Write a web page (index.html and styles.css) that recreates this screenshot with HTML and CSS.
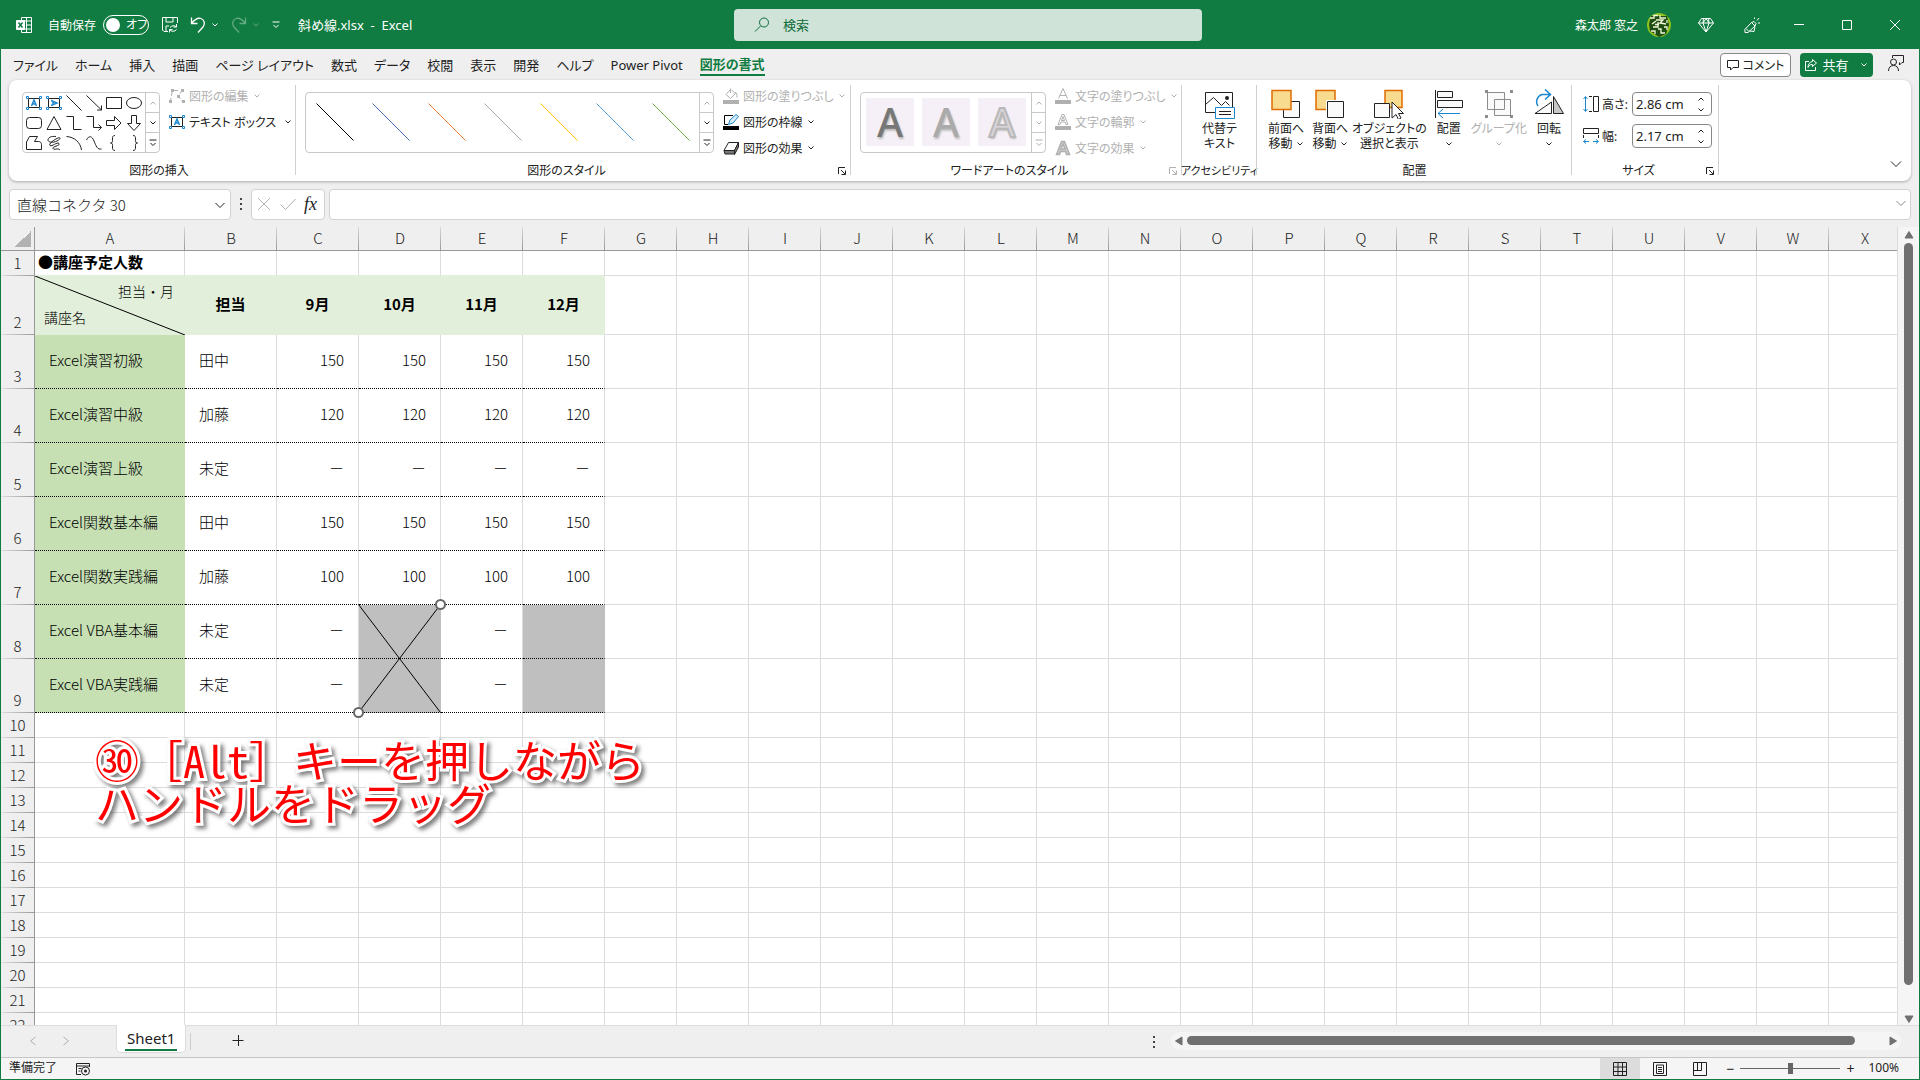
FILE: index.html
```html
<!DOCTYPE html>
<html lang="ja">
<head>
  <meta charset="UTF-8" />
  <meta name="viewport" content="width=device-width, initial-scale=1.0"/>
  <title>斜め線.xlsx - Excel</title>
  <link rel="stylesheet" href="styles.css">
</head>
<body>
  <svg class="sprite" aria-hidden="true">
    <symbol id="chev" viewBox="0 0 8 8"><path d="M1.5 2.5 4 5l2.500-2.500"/></symbol>
    <symbol id="chev-up" viewBox="0 0 8 8"><path d="M1.500 5.500 4 3l2.500 2.500"/></symbol>
    <symbol id="more" viewBox="0 0 8 8"><path d="M.5 1h7M1.500 4 4 6.500 6.500 4"/></symbol>
    <symbol id="launcher" viewBox="0 0 10 10"><path d="M1.500 8V1.500H8M4 4l4 4M8.500 4.500v4h-4"/></symbol>
    <symbol id="abox" viewBox="0 0 16 16">
      <path d="M2.500 3.500h11v9h-11z"/>
      <g class="blue"><path d="M5.500 11 8 5l2.500 6M6.500 9h3" stroke-width="1.500"/><path class="white" d="M.5 1.500h2v2h-2zM13.500 1.500h2v2h-2zM.5 12.500h2v2h-2zM13.500 12.500h2v2h-2z"/></g>
    </symbol>
    <symbol id="abox-v" viewBox="0 0 16 16">
      <path d="M2.500 3.500h11v9h-11z"/>
      <g class="blue"><path d="M5 5.500 11 8l-6 2.500M7 6.500v3" stroke-width="1.500"/><path class="white" d="M.5 1.500h2v2h-2zM13.500 1.500h2v2h-2zM.5 12.500h2v2h-2zM13.500 12.500h2v2h-2z"/></g>
    </symbol>
  </svg>

  <header class="titlebar">
    <div class="title-left">
      <svg class="i16 light" viewBox="0 0 16 16"><path d="M5.500 3V.5h10v15h-10V13M10.500.5v15M5.500 4h10M10.500 8h5M5.500 12h10"/><path fill="#fff" d="M.5 3.500h8v9h-8z"/><path class="mark" d="m2.500 5.500 4 5M6.500 5.500l-4 5"/></svg>
      <label class="autosave">自動保存 <span class="switch"><input type="checkbox"><i></i><b>オフ</b></span></label>
      <button class="tbtn save" aria-label="上書き保存"><svg class="i16 light" viewBox="0 0 16 16"><path d="M6 14.500H2L.5 13V.5h15V6M4 .5v4.500h7V.5M4 14.500V9h3M14.500 7v3h-3M7.500 15.500v-3h3M8 10.500a4 3.500 0 0 1 6.500-.5M14.500 12.500a4 3.500 0 0 1-7 0"/></svg></button>
      <button class="tbtn" aria-label="元に戻す"><svg class="i16 light" viewBox="0 0 16 16"><path stroke-width="1.300" d="M1.500.5v6h6M1.500 6.500C5 2 8 .5 11 1.500c4 1.500 4 6 2 8.500l-5 5.500"/></svg><svg class="i8 light"><use href="#chev"/></svg></button>
      <button class="tbtn dim" aria-label="やり直し"><svg class="i16 light" viewBox="0 0 16 16"><path stroke-width="1.300" d="M14.500.5v6h-6M14.500 6.500C11 2 8 .5 5 1.500c-4 1.500-4 6-2 8.500l5 5.500"/></svg><svg class="i8 light"><use href="#chev"/></svg></button>
      <button class="tbtn" aria-label="カスタマイズ"><svg class="i8 light"><use href="#more"/></svg></button>
      <span class="doc-name">斜め線.xlsx&nbsp; -&nbsp; Excel</span>
    </div>
    <label class="search">
      <svg class="i16" viewBox="0 0 16 16"><circle cx="10" cy="5.500" r="4.500"/><path d="M6.500 9 1 14.500"/></svg>
      <input type="text" placeholder="検索" aria-label="検索">
    </label>
    <div class="title-right">
      <span class="user">森太郎 窓之</span>
      <svg class="avatar" viewBox="0 0 24 24"><circle cx="12" cy="12" r="12" fill="#8dc21f"/><path fill="#1e4d14" d="M4 3h16l2 9-3 9-7 3-9-6-1-7z"/><path d="M3 5h4V2.500h4M13 2v3h6M9 7h7l-3 3 6 1M5 11l4-3M6 14h5V9M8 11.500h4M4 18h4v3M11 16h3v4h4M17 14h3v3M20 7v3" stroke="#f4f8dc" stroke-width="1.300" fill="none"/></svg>
      <button class="wbtn narrow" aria-label="Premium"><svg class="i16 light" viewBox="0 0 16 16"><path d="M3.500 1.500h9l3 4.500L8 15 .5 6zM.5 6h15M5.500 1.500 5 6l3 9 3-9-.5-4.500M5 6l3-4.500L11 6"/></svg></button>
      <button class="wbtn narrow" aria-label="新機能"><svg class="i16 light" viewBox="0 0 16 16"><path d="M1 15.500.8 12.500 7.500 5.500l3.500 3.500-7 6.500zM2 11.500l3 3M5.500 14l4.500.5 1-5M7.500 5.500 10 4.500l2 2-1 2.500M10.500 2V.5M13 3.500l2-2.500M14 6h2"/></svg></button>
      <button class="wbtn" aria-label="最小化"><svg class="i10 light" viewBox="0 0 10 10"><path d="M0 4.500h10"/></svg></button>
      <button class="wbtn" aria-label="最大化"><svg class="i10 light" viewBox="0 0 10 10"><path d="M.5.5h9v9h-9z"/></svg></button>
      <button class="wbtn" aria-label="閉じる"><svg class="i10 light" viewBox="0 0 10 10"><path d="m0 0 10 10M10 0 0 10"/></svg></button>
    </div>
  </header>

  <div class="window">
    <nav class="tabs">
      <button class="tab">ファイル</button>
      <button class="tab">ホーム</button>
      <button class="tab">挿入</button>
      <button class="tab">描画</button>
      <button class="tab">ページ レイアウト</button>
      <button class="tab">数式</button>
      <button class="tab">データ</button>
      <button class="tab">校閲</button>
      <button class="tab">表示</button>
      <button class="tab">開発</button>
      <button class="tab">ヘルプ</button>
      <button class="tab">Power Pivot</button>
      <button class="tab active">図形の書式</button>
      <div class="tab-actions">
        <button class="comment"><svg class="i12" viewBox="0 0 12 12"><path d="M.5 1.500h11v7H6L3.500 11V8.500h-3z"/></svg>コメント</button>
        <button class="share"><svg class="i12 light" viewBox="0 0 12 12"><path d="M4 2.500H.5v9h10V8M7.500.5 11.500 4 7.500 7.500V5.500C5 5.500 4 6.500 3 8.500c0-3 1.500-5.500 4.500-6z"/></svg>共有<svg class="i8 light"><use href="#chev"/></svg></button>
        <button class="presence" aria-label="共同作業"><svg class="i16" viewBox="0 0 16 16"><path d="M4.500.5h11v7H14L11.500 10V7.500M4.500.5V3"/><circle cx="5.500" cy="7" r="3"/><path d="M.5 16c0-3.500 2-5.500 5-5.500s5 2 5 5.500"/></svg></button>
      </div>
    </nav>

    <section class="ribbon">
      <div class="group g-insert">
        <div class="group-body">
          <div class="gallery">
            <div class="shapes">
              <svg class="i16"><use href="#abox"/></svg>
              <svg class="i16"><use href="#abox-v"/></svg>
              <svg class="i16" viewBox="0 0 16 16"><path d="m.5.5 15 15"/></svg>
              <svg class="i16" viewBox="0 0 16 16"><path d="m.5.500 15 14.500M15.500 10.500V15H11"/></svg>
              <svg class="i16" viewBox="0 0 16 16"><path d="M.5 2.500h15v11H.5z"/></svg>
              <svg class="i16" viewBox="0 0 16 16"><ellipse cx="8" cy="8" rx="7.500" ry="5.500"/></svg>
              <svg class="i16" viewBox="0 0 16 16"><rect x=".5" y="2.500" width="15" height="11" rx="3"/></svg>
              <svg class="i16" viewBox="0 0 16 16"><path d="m8 1.500 7 13H1z"/></svg>
              <svg class="i16" viewBox="0 0 16 16"><path d="M.5 1.500h7v13h8"/></svg>
              <svg class="i16" viewBox="0 0 16 16"><path d="M.5 1.500h7v11h8M12.500 9.500l3 3-3 3"/></svg>
              <svg class="i16" viewBox="0 0 16 16"><path d="M.5 5.500h8v-4L15 8l-6.500 6.500v-4h-8z"/></svg>
              <svg class="i16" viewBox="0 0 16 16"><path d="M5.500.5h5v8h4L8 15.500 1.500 8.500h4z"/></svg>
              <svg class="i16" viewBox="0 0 16 16"><path d="M3.500 1.500h8L8.500 6.500h4c2 0 3 1.500 3 3v5H.5V7z"/></svg>
              <svg class="i16" viewBox="0 0 16 16"><path d="M10 1.500C5 1 2 2.500 2 5s5 3 9 1 4-4 1-3S2 9 4 10.500s7-4 9-2-7 3-6 5 5-1 7 1.500"/></svg>
              <svg class="i16" viewBox="0 0 16 16"><path d="M.5 1.500c8 .5 14 6 15 13.500"/></svg>
              <svg class="i16" viewBox="0 0 16 16"><path d="M.5 5C3 0 6 1 8 6s3.500 9 7.500 8"/></svg>
              <svg class="i16" viewBox="0 0 16 16"><path d="M9 .5C6.500.5 6.500 2 6.500 4S7 8 4.500 8C7 8 6.500 10 6.500 12s0 3.500 2.500 3.500"/></svg>
              <svg class="i16" viewBox="0 0 16 16"><path d="M7 .5C9.500.5 9.500 2 9.500 4S9 8 11.500 8C9 8 9.500 10 9.500 12s0 3.500-2.500 3.500"/></svg>
            </div>
            <div class="scroller"><button class="off" aria-label="上へ"><svg class="i8"><use href="#chev-up"/></svg></button><button aria-label="下へ"><svg class="i8"><use href="#chev"/></svg></button><button aria-label="その他"><svg class="i8"><use href="#more"/></svg></button></div>
          </div>
          <div class="stack">
            <button class="cmd" disabled><svg class="i16" viewBox="0 0 16 16"><path d="M3 4 1.500 13.500M13 2.500 9.500 8l3.500 5.500M5 2.500h6" stroke-dasharray="4 2"/><path class="solid" d="M2 1h3v3H2zM12 1h3v3h-3zM0 12h3v3H0zM13 12h3v3h-3zM8 7h3v3H8z"/></svg>図形の編集<svg class="i8"><use href="#chev"/></svg></button>
            <button class="cmd wide-gap"><svg class="i16"><use href="#abox"/></svg>テキスト ボックス<svg class="i8"><use href="#chev"/></svg></button>
          </div>
        </div>
        <div class="group-foot"><span>図形の挿入</span></div>
      </div>

      <div class="group g-styles">
        <div class="group-body">
          <div class="gallery">
            <div class="lines">
              <svg viewBox="0 0 38 38"><path stroke="#000" d="m.5.5 37 37"/></svg>
              <svg viewBox="0 0 38 38"><path stroke="#4472c4" d="m.5.5 37 37"/></svg>
              <svg viewBox="0 0 38 38"><path stroke="#ed7d31" d="m.5.5 37 37"/></svg>
              <svg viewBox="0 0 38 38"><path stroke="#a5a5a5" d="m.5.5 37 37"/></svg>
              <svg viewBox="0 0 38 38"><path stroke="#ffc000" d="m.5.5 37 37"/></svg>
              <svg viewBox="0 0 38 38"><path stroke="#5b9bd5" d="m.5.5 37 37"/></svg>
              <svg viewBox="0 0 38 38"><path stroke="#70ad47" d="m.5.5 37 37"/></svg>
            </div>
            <div class="scroller"><button class="off" aria-label="上へ"><svg class="i8"><use href="#chev-up"/></svg></button><button aria-label="下へ"><svg class="i8"><use href="#chev"/></svg></button><button aria-label="その他"><svg class="i8"><use href="#more"/></svg></button></div>
          </div>
          <div class="stack">
            <button class="cmd" disabled><svg class="i16" viewBox="0 0 16 16"><path d="M7.500 1.500 3 6.500l4.500 4 5-5-4-3.500M7.500 5V.5M12 4.500c2 0 2 2 2 5"/><path class="solid" d="M0 12h16v4H0z"/></svg>図形の塗りつぶし<svg class="i8"><use href="#chev"/></svg></button>
            <button class="cmd"><svg class="i16 black" viewBox="0 0 16 16"><path d="M10 1.500H1.500v9H5"/><path class="blue" fill="#d9ecf9" d="M5.500 10.500 7 6l6-5.500 2.500 2L10 9z"/><path class="solid" d="M0 12h16v4H0z"/></svg>図形の枠線<svg class="i8"><use href="#chev"/></svg></button>
            <button class="cmd"><svg class="i16" viewBox="0 0 16 16"><path d="M5.500 2.500h10l-4 8H1z"/><path fill="#777" d="M11.500 10.500v4L15.500 7V2.500zM1 10.500h10.500v3.500H2z"/></svg>図形の効果<svg class="i8"><use href="#chev"/></svg></button>
          </div>
        </div>
        <div class="group-foot"><span>図形のスタイル</span><button class="launch" aria-label="図形の書式設定"><svg class="i10"><use href="#launcher"/></svg></button></div>
      </div>

      <div class="group g-wordart">
        <div class="group-body">
          <div class="gallery off">
            <div class="arts">
              <button class="art art-dark">A</button>
              <button class="art art-mid">A</button>
              <button class="art art-line">A</button>
            </div>
            <div class="scroller off"><button class="off" aria-label="上へ"><svg class="i8"><use href="#chev-up"/></svg></button><button class="off" aria-label="下へ"><svg class="i8"><use href="#chev"/></svg></button><button class="off" aria-label="その他"><svg class="i8"><use href="#more"/></svg></button></div>
          </div>
          <div class="stack">
            <button class="cmd" disabled><svg class="i16" viewBox="0 0 16 16"><path d="M3.500 10.500 8 .5l4.500 10M5 7.500h6"/><path class="solid" d="M0 12h16v4H0z"/></svg>文字の塗りつぶし<svg class="i8"><use href="#chev"/></svg></button>
            <button class="cmd" disabled><svg class="i16" viewBox="0 0 16 16"><path d="M3 10.500 7 .5h2l4 10h-2L10 8H6l-1 2.500zM6.500 6.500h3L8 2.500z"/><path class="solid" d="M0 12h16v4H0z"/></svg>文字の輪郭<svg class="i8"><use href="#chev"/></svg></button>
            <button class="cmd" disabled><svg class="i16" viewBox="0 0 16 16"><path fill="#ccc" stroke-width="1.500" d="M1.500 14.500 6.500 1.500h3l5 13h-3l-1-3h-5l-1 3zM6 9h4L8 4z"/></svg>文字の効果<svg class="i8"><use href="#chev"/></svg></button>
          </div>
        </div>
        <div class="group-foot"><span>ワードアートのスタイル</span><button class="launch off" aria-label="文字の効果の設定"><svg class="i10"><use href="#launcher"/></svg></button></div>
      </div>

      <div class="group g-access">
        <div class="group-body">
          <button class="big"><svg class="i30" viewBox="0 0 30 30"><path d="M10 23.500H.5v-20h27V18M.5 15.500l8-7 8 8 4-4 4 4"/><circle class="solid" cx="22" cy="9" r="2"/><path class="blue white" d="M10.500 18.500h19v11h-19z"/><path d="M14 22.500h12M14 25.500h12"/></svg>代替テ<br>キスト</button>
        </div>
        <div class="group-foot"><span>アクセシビリティ</span></div>
      </div>

      <div class="group g-arrange">
        <div class="group-body">
          <button class="big"><svg class="i30" viewBox="0 0 30 30"><path class="paper" d="M12.500 12.500h16v16h-16z"/><path class="gold" d="M1 1.500h19v19H1z"/></svg>前面へ<br>移動 <svg class="i8"><use href="#chev"/></svg></button>
          <button class="big"><svg class="i30" viewBox="0 0 30 30"><path class="gold" d="M1 1.500h19v19H1z"/><path d="M11 11h19v19H11z" fill="#fff" stroke="none"/><path class="paper" d="M12.500 12.500h16v16h-16z"/></svg>背面へ<br>移動 <svg class="i8"><use href="#chev"/></svg></button>
          <button class="big wide"><svg class="i30" viewBox="0 0 30 30"><path class="gold" d="M11 1.500h17v17H11z"/><path class="paper" d="M.5 14.500h15v14H.5z"/><path fill="#fff" d="M18 13v16l4-3.500 2.500 5 2.500-1.500-2.500-4.500h5z"/></svg>オブジェクトの<br>選択と表示</button>
          <button class="big"><svg class="i30" viewBox="0 0 30 30"><path d="M1.500 1v28"/><path class="paper" d="M3.500 2.500h15v6h-15zM3.500 11.500h25v7h-25z"/><path class="blue" d="M4 24.500h22M9 20l-5 4.500L9 29"/></svg>配置<br><svg class="i8"><use href="#chev"/></svg></button>
          <button class="big" disabled><svg class="i30" viewBox="0 0 30 30"><path class="paper dark" d="M3.500 3.500h17v17h-17zM10.500 10.500h16v16h-16z"/><path class="solid dark" d="M1 1h3v3H1zM26 1h3v3h-3zM1 26h3v3H1zM26 26h3v3h-3z"/></svg>グループ化<br><svg class="i8"><use href="#chev"/></svg></button>
          <button class="big"><svg class="i30" viewBox="0 0 30 30"><path class="paper" d="M1 24.500 17.500 13v11.500z"/><path fill="#c8c8c8" d="M19.500 7.500 29.500 24.500h-10z"/><path class="blue" d="M4 17A7.500 7.500 0 0 1 8 5.500h8M11 .5l5.500 5-5.500 5" stroke-width="1.500"/></svg>回転<br><svg class="i8"><use href="#chev"/></svg></button>
        </div>
        <div class="group-foot"><span>配置</span></div>
      </div>

      <div class="group g-size">
        <div class="sizes">
          <div class="size-row">
            <svg class="i16" viewBox="0 0 16 16"><path class="blue" d="M2.500 1v14M.5 3l2-2.500 2 2.500M.5 13l2 2.500 2-2.500"/><path d="M10.500.5h5v15h-5zM6 .5h3M6 15.500h3"/></svg>
            <label for="shapeHeight">高さ:</label>
            <div class="spin"><input id="shapeHeight" type="text" value="2.86 cm"><span><button aria-label="増やす"><svg class="i8"><use href="#chev-up"/></svg></button><button aria-label="減らす"><svg class="i8"><use href="#chev"/></svg></button></span></div>
          </div>
          <div class="size-row">
            <svg class="i16" viewBox="0 0 16 16"><path d="M.5.5h15v5H.5zM.5 7v3M15.500 7v3"/><path class="blue" d="M1 13.500h5M10 13.500h5M3 11.500.5 13.500l2.500 2M13 11.500l2.500 2-2.500 2"/></svg>
            <label for="shapeWidth">幅:</label>
            <div class="spin"><input id="shapeWidth" type="text" value="2.17 cm"><span><button aria-label="増やす"><svg class="i8"><use href="#chev-up"/></svg></button><button aria-label="減らす"><svg class="i8"><use href="#chev"/></svg></button></span></div>
          </div>
        </div>
        <div class="group-foot"><span>サイズ</span><button class="launch" aria-label="サイズの設定"><svg class="i10"><use href="#launcher"/></svg></button></div>
      </div>
      <button class="collapse" aria-label="リボンを折りたたむ"><svg class="i12" viewBox="0 0 12 12"><path d="m1 3.500 5 5 5-5"/></svg></button>
    </section>

    <div class="formula-bar">
      <div class="namebox"><input type="text" value="直線コネクタ 30" aria-label="名前ボックス"><button aria-label="名前の一覧"><svg class="i12" viewBox="0 0 12 12"><path d="m1.500 4 4.500 4.500L10.500 4"/></svg></button></div>
      <span class="dots"></span>
      <div class="fx">
        <button disabled aria-label="キャンセル"><svg class="i16" viewBox="0 0 16 16"><path d="m2 2 12 12M14 2 2 14"/></svg></button>
        <button disabled aria-label="入力"><svg class="i16" viewBox="0 0 16 16"><path d="m.5 8.500 5 5L15.500 3"/></svg></button>
        <button class="fn" aria-label="関数の挿入">fx</button>
      </div>
      <div class="formula"><input type="text" aria-label="数式バー"><button aria-label="展開"><svg class="i12" viewBox="0 0 12 12"><path d="m1.500 4 4.500 4.500L10.500 4"/></svg></button></div>
    </div>

    <main class="sheet">
      <div class="grid-view">
        <table class="grid" id="grid">
          <colgroup><col class="c-head"><col class="c-a"><col class="c-b"><col class="c-num"><col class="c-num"><col class="c-num"><col class="c-num"></colgroup>
          <thead><tr><th class="corner"></th></tr></thead>
          <tbody>
            <tr class="r1"><td class="title">●講座予定人数</td><td></td><td></td><td></td><td></td><td></td></tr>
            <tr class="r2">
              <td class="split"><svg class="slash" viewBox="0 0 150 59" preserveAspectRatio="none"><path d="M0 0l150 59"/></svg><div class="upper">担当・月</div><div class="lower">講座名</div></td>
              <td>担当</td><td>9月</td><td>10月</td><td>11月</td><td>12月</td>
            </tr>
            <tr class="data"><td>Excel演習初級</td><td>田中</td><td>150</td><td>150</td><td>150</td><td>150</td></tr>
            <tr class="data"><td>Excel演習中級</td><td>加藤</td><td>120</td><td>120</td><td>120</td><td>120</td></tr>
            <tr class="data"><td>Excel演習上級</td><td>未定</td><td>－</td><td>－</td><td>－</td><td>－</td></tr>
            <tr class="data"><td>Excel関数基本編</td><td>田中</td><td>150</td><td>150</td><td>150</td><td>150</td></tr>
            <tr class="data"><td>Excel関数実践編</td><td>加藤</td><td>100</td><td>100</td><td>100</td><td>100</td></tr>
            <tr class="data"><td>Excel VBA基本編</td><td>未定</td><td>－</td>
              <td class="gray"><svg class="cross" viewBox="0 0 96 122"><path d="m6.500 6.500 82 108M88.500 6.500l-82 108"/><circle cx="88.500" cy="6.500" r="4.500"/><circle cx="6.500" cy="114.500" r="4.500"/></svg></td>
              <td>－</td><td class="gray"></td></tr>
            <tr class="data"><td>Excel VBA実践編</td><td>未定</td><td>－</td><td class="gray"></td><td>－</td><td class="gray"></td></tr>
          </tbody>
        </table>
        <p class="caption">㉚［<span>Alt</span>］キーを押しながら<br>ハンドルをドラッグ</p>
      </div>
      <div class="vscroll"><svg class="i10" viewBox="0 0 10 10"><path d="M5 1.500 9 8H1z"/></svg><div class="thumb"></div><svg class="i10" viewBox="0 0 10 10"><path d="M5 8.500 1 2h8z"/></svg></div>
    </main>

    <div class="sheet-tabs">
      <button class="nav" disabled aria-label="前のシート"><svg class="i10" viewBox="0 0 10 10"><path d="M7.500 1 2.500 5l5 4"/></svg></button>
      <button class="nav" disabled aria-label="次のシート"><svg class="i10" viewBox="0 0 10 10"><path d="m2.500 1 5 4-5 4"/></svg></button>
      <button class="sheet-tab"><span>Sheet1</span></button>
      <button class="add" aria-label="新しいシート"><svg class="i12" viewBox="0 0 12 12"><path d="M.5 6.500h11M6.500 1v11"/></svg></button>
      <span class="dots"></span>
      <div class="hscroll"><svg class="i10" viewBox="0 0 10 10"><path d="M1.500 5 8 1v8z"/></svg><div class="thumb"></div><svg class="i10" viewBox="0 0 10 10"><path d="M8.500 5 2 1v8z"/></svg></div>
    </div>

    <footer class="status">
      <span>準備完了</span>
      <button class="macro" aria-label="マクロの記録"><svg class="i14" viewBox="0 0 14 14"><path d="M5 12.500H.5V1.500h13V5M.5 4h13M2.500 6.500h3M2.500 9h2"/><circle cx="9.500" cy="9" r="4"/><circle class="solid" cx="9.500" cy="9" r="1.500"/></svg></button>
      <div class="views">
        <button class="view on" aria-label="標準"><svg class="i14" viewBox="0 0 14 14"><path d="M.5.5h13v13H.5zM5 .5v13M9.500.5v13M.5 5h13M.5 9.500h13"/></svg></button>
        <button class="view" aria-label="ページ レイアウト"><svg class="i14" viewBox="0 0 14 14"><path d="M.5.500h13v13H.5zM3.500 3h7v8.500h-7zM5 5.500h4M5 7.500h4M5 9.500h4"/></svg></button>
        <button class="view" aria-label="改ページ プレビュー"><svg class="i14" viewBox="0 0 14 14"><path d="M.5.500h13v13H.5zM.5 8.500h8v-8M4.500.5v8"/></svg></button>
      </div>
      <button class="zoom-btn" aria-label="縮小">−</button>
      <input class="zoom" type="range" min="0" max="100" value="50" aria-label="ズーム">
      <button class="zoom-btn" aria-label="拡大">+</button>
      <span class="percent">100%</span>
    </footer>
  </div>
  <script src="script.js"></script>
</body>
</html>
```

FILE: styles.css
```css
* {
  box-sizing: border-box;
}
body {
  margin: 0;
  height: 100vh;
  display: flex;
  flex-direction: column;
  overflow: hidden;
  background: #efefef;
  color: #222;
  font-family: "Noto Sans", "Noto Sans CJK JP", sans-serif;
  font-size: 12px;
  font-feature-settings: "palt";
}
button, input {
  font: inherit;
  font-feature-settings: inherit;
  color: inherit;
  border: 0;
  padding: 0;
  margin: 0;
  background: none;
}
input {
  min-width: 0;
  outline: 0;
}
button {
  white-space: nowrap;
}

/* icons */
.sprite {
  position: absolute;
  width: 0;
  height: 0;
}
svg {
  flex: none;
  fill: none;
  stroke: currentColor;
}
.i8 { width: 8px; height: 8px; }
.i10 { width: 10px; height: 10px; }
.i12 { width: 12px; height: 12px; }
.i14 { width: 14px; height: 14px; }
.i16 { width: 16px; height: 16px; }
.i30 { width: 30px; height: 30px; }
.light { color: #fff; }
.black { color: #000; }
.dark { color: #8c8c8c; stroke: #8c8c8c; }
.blue { stroke: #1b87cf; }
.white { fill: #fff; }
.solid { fill: currentColor; stroke: none; }
.paper { fill: #fafafa; }
.gold { fill: #f8db8f; stroke: #e06c00; stroke-width: 1.5; }
.mark { stroke: #107c41; stroke-width: 1.5; }
button:disabled,
.off {
  color: #b0b0b0;
}

/* title bar */
.titlebar {
  flex: none;
  height: 49px;
  display: grid;
  grid-template-columns: 1fr 468px 1fr;
  align-items: center;
  padding-left: 16px;
  background: #107c41;
  color: #fff;
}
.title-left,
.title-right {
  display: flex;
  align-items: center;
}
.autosave {
  display: flex;
  align-items: center;
  gap: 7px;
  margin: 0 13px 0 16px;
}
.switch {
  position: relative;
  width: 46px;
  height: 20px;
  border: 1px solid #fff;
  border-radius: 10px;
}
.switch input {
  position: absolute;
  inset: 0;
  opacity: 0;
}
.switch i {
  position: absolute;
  left: 2px;
  top: 2px;
  width: 14px;
  height: 14px;
  border-radius: 50%;
  background: #fff;
}
.switch b {
  display: block;
  padding-left: 22px;
  line-height: 18px;
  font-weight: 400;
}
.tbtn {
  display: flex;
  align-items: center;
  gap: 5px;
  margin-right: 12px;
}
.dim {
  opacity: .35;
}
.doc-name {
  margin-left: 6px;
  font-size: 13px;
}
.search {
  display: flex;
  align-items: center;
  gap: 13px;
  height: 32px;
  padding-left: 20px;
  border-radius: 4px;
  background: #cfe3d8;
  color: #0e6b38;
  font-size: 13px;
}
.search input {
  flex: 1;
}
.search input::placeholder {
  color: #0e6b38;
}
.title-right {
  justify-content: flex-end;
  padding-right: 1px;
}
.avatar {
  width: 24px;
  height: 24px;
  margin: 0 12px 0 9px;
  stroke: none;
}
.wbtn {
  display: flex;
  justify-content: center;
  width: 48px;
}
.narrow {
  width: 46px;
}

/* window below the title bar */
.window {
  flex: 1;
  min-height: 0;
  display: flex;
  flex-direction: column;
  border: 1px solid #107c41;
  border-top: 0;
}
.tabs {
  flex: none;
  display: flex;
  align-items: center;
  gap: 17px;
  height: 31px;
  padding: 0 15px 0 12px;
  font-size: 13px;
}
.tab {
  height: 23px;
  line-height: 22px;
}
.active {
  border-bottom: 2px solid #107c41;
  color: #107c41;
  font-weight: 700;
}
.tab-actions {
  display: flex;
  align-items: center;
  margin-left: auto;
}
.comment,
.share {
  display: flex;
  align-items: center;
  justify-content: center;
  height: 24px;
  border-radius: 4px;
}
.comment {
  gap: 4px;
  width: 71px;
  border: 1px solid #888;
  background: #fff;
  font-size: 12px;
}
.share {
  gap: 5px;
  width: 73px;
  margin: 0 15px 0 9px;
  background: #107c41;
  color: #fff;
}
.share .i8 {
  margin-left: 6px;
}

/* ribbon */
.ribbon {
  flex: none;
  display: flex;
  margin: 0 8px;
  padding: 3px 0;
  border-radius: 8px;
  background: #fff;
  box-shadow: 0 1px 3px #aaa;
}
.group {
  position: relative;
  flex: none;
  height: 95px;
  display: flex;
  flex-direction: column;
  justify-content: space-between;
}
.group::after {
  content: "";
  position: absolute;
  top: 2px;
  right: 0;
  bottom: 3px;
  width: 1px;
  background: #d0d0d0;
}
.group-body {
  display: flex;
}
.group-foot {
  display: flex;
  align-items: center;
  height: 14px;
  line-height: 14px;
}
.group-foot span {
  flex: 1;
  text-align: center;
  white-space: nowrap;
}
.launch {
  width: 14px;
  height: 10px;
}
.launch svg {
  display: block;
}
.g-insert { width: 287px; padding-left: 13px; }
.g-styles { width: 555px; }
.g-wordart { width: 331px; }
.g-access { width: 75px; }
.g-access .group-foot { justify-content: center; font-size: 11px; }
.g-access .group-foot span { flex: none; }
.g-arrange { width: 315px; }
.g-size { width: 147px; }
.g-styles .gallery,
.g-wordart .gallery { margin-left: 9px; }
.g-access .group-body { justify-content: center; }
.g-arrange .group-body { padding-left: 7px; }

.gallery {
  display: flex;
  height: 61px;
  margin-top: 9px;
  border: 1px solid #c8c8c8;
  border-radius: 4px;
}
.shapes {
  display: grid;
  grid-template-columns: repeat(6, 16px);
  gap: 4px;
  padding: 2px 3px;
}
.lines {
  display: flex;
  gap: 18px;
  padding: 10px 9px 0 10px;
}
.lines svg {
  width: 38px;
  height: 38px;
}
.scroller {
  display: flex;
  flex-direction: column;
  width: 14px;
  border-left: 1px solid #c8c8c8;
}
.scroller button {
  flex: 1;
  display: flex;
  align-items: center;
  justify-content: center;
}
.scroller button + button {
  border-top: 1px solid #c8c8c8;
}
.arts {
  display: flex;
  gap: 8px;
  padding: 5px;
}
.art {
  width: 48px;
  height: 48px;
  background: #f5f0f7;
  color: #777;
  font-family: "Noto Sans", sans-serif;
  font-size: 40px;
  font-weight: 500;
  line-height: 48px;
  text-shadow: 1px 2px 2px #bbb;
}
.art-mid {
  color: #aaa;
}
.art-line {
  color: #d8d4da;
  -webkit-text-stroke: 2px #b8b8b8;
}
.stack {
  display: flex;
  flex-direction: column;
  align-items: flex-start;
  margin-left: 9px;
}
.cmd {
  display: flex;
  align-items: center;
  gap: 4px;
  height: 26px;
}
.wide-gap .i8 {
  margin-left: 4px;
}
.big {
  min-width: 44px;
  padding-top: 6px;
  line-height: 15px;
  text-align: center;
}
.big .i30 {
  display: block;
  margin: 0 auto 2px;
}
.big.wide {
  min-width: 66px;
}
.big.wide ~ .big {
  min-width: 44px;
}
.sizes {
  display: flex;
  flex-direction: column;
  gap: 8px;
  padding: 9px 7px 0 11px;
}
.size-row {
  display: flex;
  align-items: center;
  gap: 3px;
}
.size-row label {
  flex: 1;
}
.spin {
  display: flex;
  width: 80px;
  height: 24px;
  border: 1px solid #888;
  border-radius: 4px;
}
.spin input {
  flex: 1;
  padding-left: 3px;
  font-size: 13px;
}
.spin span {
  display: flex;
  flex-direction: column;
  justify-content: space-around;
  width: 14px;
}
.spin span button {
  display: flex;
}
.collapse {
  align-self: flex-end;
  margin: 0 9px 4px auto;
}
.collapse svg {
  display: block;
  margin-bottom: 4px;
}

/* formula bar */
.formula-bar {
  flex: none;
  display: flex;
  align-items: center;
  height: 46px;
  padding: 0 8px;
}
.namebox,
.fx,
.formula {
  display: flex;
  align-items: center;
  height: 31px;
  border: 1px solid #d2d2d2;
  border-radius: 4px;
  background: #fff;
}
.namebox {
  width: 222px;
  padding: 0 4px 0 7px;
  font-family: "Noto Sans CJK JP", sans-serif;
  font-size: 15px;
  font-weight: 300;
  font-feature-settings: normal;
}
.namebox input,
.formula input {
  flex: 1;
}
.dots {
  width: 2px;
  height: 12px;
  margin: 0 9px;
  background: repeating-linear-gradient(#444 0 2px, transparent 2px 5px);
}
.fx {
  width: 74px;
  gap: 8px;
  padding-left: 4px;
}
.fx button {
  display: flex;
}
.fn {
  font-family: "Liberation Serif", serif;
  font-size: 18px;
  font-style: italic;
}
.formula {
  flex: 1;
  margin-left: 4px;
  padding-right: 3px;
  color: #888;
}

/* worksheet */
.sheet {
  flex: 1;
  min-height: 0;
  display: flex;
}
.grid-view {
  position: relative;
  flex: 1;
  min-width: 0;
  overflow: hidden;
  background: #fff;
  border-right: 1px solid #dcdcdc;
}
.grid {
  width: 1900px;
  table-layout: fixed;
  border-spacing: 0;
  color: #000;
  font-family: "Noto Sans CJK JP", sans-serif;
  font-size: 15px;
  font-weight: 300;
  font-feature-settings: normal;
  line-height: 20px;
}
.c-head { width: 34px; }
.c-a { width: 150px; }
.c-b { width: 92px; }
.c-num { width: 82px; }
.c-std { width: 72px; }
.grid th,
.grid td {
  height: 25px;
  padding: 0 0 3px;
  border: solid #dcdcdc;
  border-width: 0 1px 1px 0;
  white-space: nowrap;
}
.grid th {
  font-weight: 300;
  color: #222;
  background: linear-gradient(90deg, #ddd, #999) left bottom / 100% 1px no-repeat #efefef;
  border-bottom: 0;
  border-right-color: #999;
  vertical-align: bottom;
}
.grid thead th {
  height: 24px;
  padding-bottom: 2px;
  background: linear-gradient(#d8d8d8, #999) right top / 1px 100% no-repeat #efefef;
  border-right: 0;
  border-bottom: 1px solid #999;
}
.grid .corner {
  background: linear-gradient(135deg, transparent 50%, #b2b2b2 50%) 14px 4px / 16px 16px no-repeat #efefef;
  border-right: 1px solid #999;
}
.grid .title {
  padding-left: 3px;
  font-weight: 700;
}
.grid .r1 td:nth-child(-n+7) {
  border-bottom-color: #e2efda;
}
.grid .r2 th,
.grid .r2 td {
  height: 59px;
}
.grid .r2 td:nth-child(-n+7) {
  border-color: #e2efda;
  background: #e2efda;
  font-weight: 700;
  text-align: center;
}
.grid .r2 .split:nth-child(2) {
  position: relative;
  font-size: 14px;
  font-weight: 300;
  line-height: 26px;
}
.slash {
  position: absolute;
  left: 0;
  top: 0;
  width: 150px;
  height: 59px;
}
.upper {
  padding-right: 10px;
  text-align: right;
}
.lower {
  padding-left: 9px;
  text-align: left;
}
.grid .data th,
.grid .data td {
  height: 54px;
}
.grid .data td:nth-child(-n+7) {
  padding: 0 14px 3px;
  border-bottom: 1px dotted #000;
  text-align: right;
}
.grid .data td:nth-child(-n+3) {
  text-align: left;
}
.grid .data td:nth-child(2) {
  background: #c6e0b4;
  border-right-color: #c6e0b4;
}
.grid .data .gray {
  position: relative;
  background: #bfbfbf;
  border-right-color: #bfbfbf;
}
.cross {
  position: absolute;
  z-index: 1;
  left: -7px;
  top: -7px;
  width: 96px;
  height: 122px;
}
.cross circle {
  fill: #fff;
  stroke: #666;
  stroke-width: 2;
}
.caption {
  position: absolute;
  left: 94px;
  top: 511px;
  margin: 0;
  color: #f00;
  font-family: "Noto Sans CJK JP", sans-serif;
  font-size: 44px;
  font-feature-settings: normal;
  font-weight: 400;
  line-height: 43px;
  white-space: nowrap;
  -webkit-text-stroke: 6px #fff;
  paint-order: stroke fill;
  filter: drop-shadow(3px 3px 2px rgba(0, 0, 0, .5));
}
.caption span {
  font-feature-settings: "hwid";
}

/* scrollbars */
.vscroll,
.hscroll {
  display: flex;
  align-items: center;
  gap: 3px;
  background: #f5f5f5;
  color: #707070;
}
.vscroll {
  flex-direction: column;
  width: 21px;
  padding: 3px 0 1px;
}
.thumb {
  flex: 1;
  background: #707070;
  border-radius: 5px;
}
.vscroll .thumb {
  width: 9px;
  margin-bottom: 26px;
}
.vscroll svg,
.hscroll svg {
  fill: currentColor;
}
.hscroll {
  width: 730px;
  height: 18px;
  margin: 0 18px 2px 0;
  padding: 0 3px;
  border-radius: 9px;
}
.hscroll .thumb {
  height: 9px;
  margin-right: 30px;
}

/* sheet tabs */
.sheet-tabs {
  flex: none;
  display: flex;
  align-items: center;
  height: 32px;
  border-top: 1px solid #dcdcdc;
}
.nav {
  width: 33px;
  padding-left: 6px;
}
.nav:first-child {
  margin-left: 12px;
}
.sheet-tab {
  align-self: flex-start;
  height: 28px;
  margin: -1px 0 0 37px;
  padding: 0 8px;
  border: 1px solid #dcdcdc;
  border-top: 0;
  border-radius: 0 0 5px 5px;
  background: #fff;
  font-size: 15px;
}
.sheet-tab span {
  display: block;
  height: 25px;
  padding: 0 2px;
  border-bottom: 2px solid #107c41;
  line-height: 25px;
}
.add {
  margin-left: 4px;
  padding: 0 41px;
  border-left: 1px solid #ccc;
}
.sheet-tabs .dots {
  margin: 0 16px 0 auto;
}

/* status bar */
.status {
  flex: none;
  display: flex;
  align-items: center;
  height: 22px;
  padding: 0 20px 0 8px;
  border-top: 1px solid #c6c6c6;
  background: #f5f5f5;
  line-height: 18px;
}
.status > span {
  padding-bottom: 2px;
}
.macro {
  display: flex;
  margin-left: 19px;
}
.views {
  display: flex;
  margin-left: auto;
}
.view {
  display: flex;
  align-items: center;
  justify-content: center;
  width: 40px;
  height: 21px;
}
.on {
  background: #dcdcdc;
}
.zoom-btn {
  width: 20px;
  font-size: 14px;
}
.zoom {
  width: 100px;
  height: 16px;
  appearance: none;
  background: linear-gradient(#666, #666) center / 100% 1px no-repeat;
}
.zoom::-webkit-slider-thumb {
  appearance: none;
  width: 5px;
  height: 11px;
  background: #666;
}
.percent {
  margin-left: 8px;
}
```

FILE: script.js
```js
const table = document.getElementById("grid");
const letters = "ABCDEFGHIJKLMNOPQRSTUVWX".split("");
const lastRow = 22;

// standard width columns after F
for (let i = 6; i < letters.length; i++) {
  const col = document.createElement("col");
  col.className = "c-std";
  table.querySelector("colgroup").appendChild(col);
}

letters.forEach(letter => {
  const th = document.createElement("th");
  th.innerText = letter;
  table.tHead.rows[0].appendChild(th);
});

const body = table.tBodies[0];
for (let r = 0; r < lastRow; r++) {
  const row = body.rows[r] || body.insertRow();
  while (row.cells.length < letters.length) {
    row.insertCell();
  }
  const th = document.createElement("th");
  th.innerText = r + 1;
  row.prepend(th);
}
```
